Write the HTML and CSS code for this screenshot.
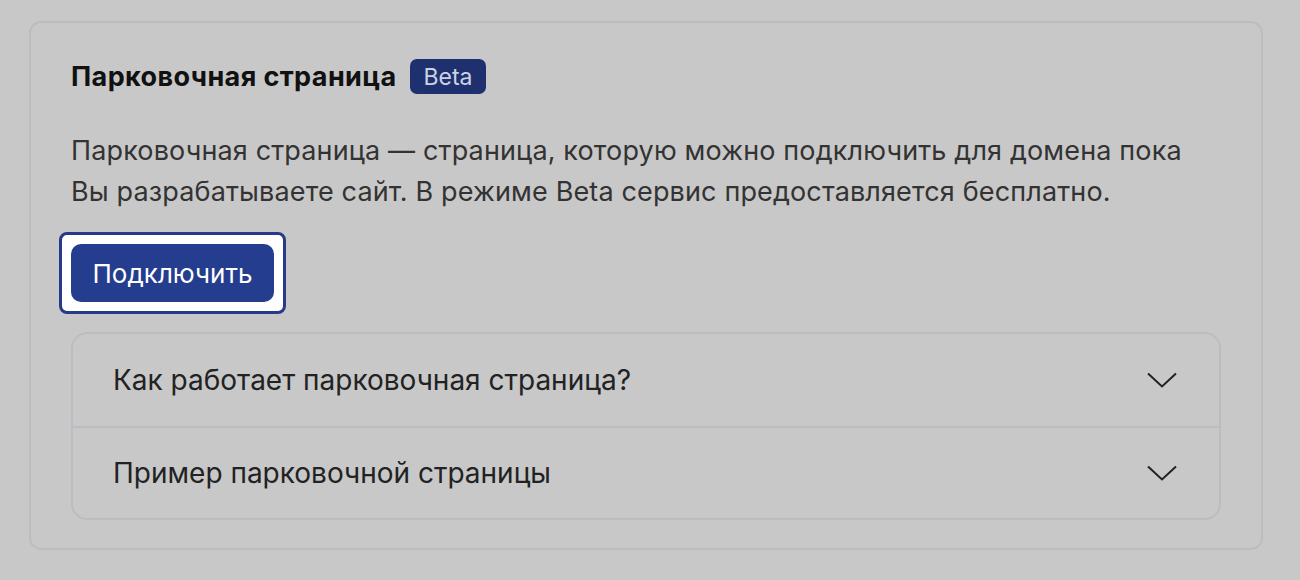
FILE: index.html
```html
<!DOCTYPE html>
<html lang="ru">
<head>
<meta charset="utf-8">
<link rel="stylesheet" href="styles.css">
</head>
<body>
<section class="card">
  <div class="head">
    <h2 class="title">Парковочная страница</h2>
    <span class="badge">Beta</span>
  </div>
  <p class="desc">Парковочная страница — страница, которую можно подключить для домена пока<br>Вы разрабатываете сайт. В режиме Beta сервис предоставляется бесплатно.</p>
  <div class="focus-ring">
    <button class="btn">Подключить</button>
  </div>
  <div class="accordion">
    <div class="acc-row">
      <span>Как работает парковочная страница?</span>
      <svg class="chev" width="30" height="16" viewBox="0 0 30 16"><path d="M1 1.5 L15 14.5 L29 1.5" fill="none" stroke="#222" stroke-width="2"/></svg>
    </div>
    <div class="acc-row">
      <span>Пример парковочной страницы</span>
      <svg class="chev" width="30" height="16" viewBox="0 0 30 16"><path d="M1 1.5 L15 14.5 L29 1.5" fill="none" stroke="#222" stroke-width="2"/></svg>
    </div>
  </div>
</section>
</body>
</html>
```

FILE: styles.css
```css
* { box-sizing: border-box; }
html, body { margin: 0; padding: 0; }
body {
  background: #c8c8c8;
  font-family: Inter, "Noto Sans", sans-serif;
  width: 1300px;
  height: 580px;
  padding: 21px 0 0 29px;
}
.card {
  width: 1234px;
  height: 529px;
  border: 2px solid #bcbcc3;
  border-radius: 12px;
  padding: 36px 40px 0 40px;
}
.head {
  display: flex;
  align-items: center;
  gap: 14px;
  height: 35px;
}
.title {
  margin: 0;
  font-size: 27px;
  font-weight: 700;
  letter-spacing: 0.4px;
  color: #111;
}
.badge {
  background: #1f306f;
  color: #cdd2e3;
  font-size: 23px;
  height: 35px;
  padding: 0 13px;
  border-radius: 7px;
  display: flex;
  align-items: center;
}
.desc {
  margin: 36px 0 20px;
  font-size: 27px;
  line-height: 41px;
  letter-spacing: 0.14px;
  color: #333;
}
.focus-ring {
  display: inline-flex;
  margin-left: -12px;
  padding: 9px;
  border: 3px solid #26398a;
  background: #fff;
  border-radius: 8px;
}
.btn {
  width: 203px;
  height: 58px;
  border: 0;
  border-radius: 10px;
  background: #243d8f;
  color: #fff;
  font-family: Inter, "Noto Sans", sans-serif;
  font-size: 26px;
  padding: 0;
}
.accordion {
  margin-top: 18px;
  width: 1150px;
  border: 2px solid #bcbcc3;
  border-radius: 16px;
}
.acc-row {
  display: flex;
  align-items: center;
  justify-content: space-between;
  height: 92px;
  padding: 0 42px 0 40px;
  font-size: 28px;
  color: #222;
}
.acc-row + .acc-row { border-top: 2px solid #bcbcc3; }
.chev { display: block; }
```
